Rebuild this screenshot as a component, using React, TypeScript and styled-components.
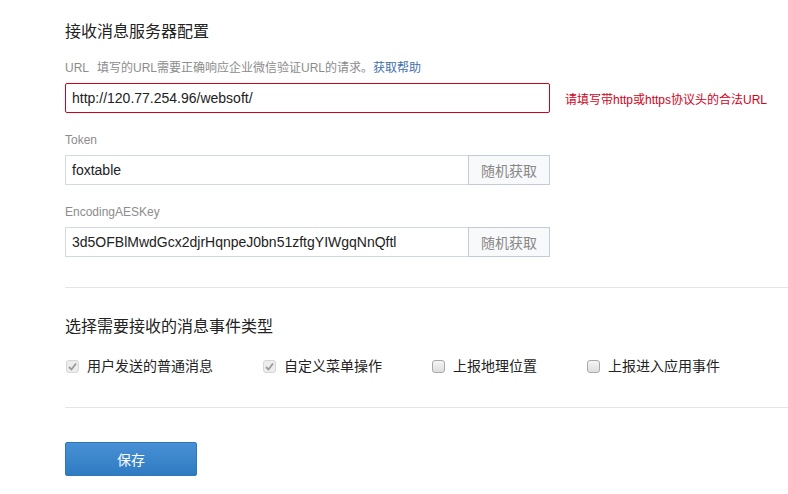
import * as React from 'react'
import styled, { createGlobalStyle } from 'styled-components'

const GlobalStyle = createGlobalStyle`
    body {
        margin: 0;
        background: #fff;
        font-family: 'Liberation Sans', 'Noto Sans CJK SC', sans-serif;
    }
`

const Page = styled.div`
    padding: 21px 0 0 65px;
    width: 723px;
`

const SectionTitle = styled.h3`
    margin: 0;
    font-size: 16px;
    line-height: 22px;
    font-weight: normal;
    color: #222;
`

const Fields = styled.div`
    display: flex;
    flex-direction: column;
    gap: 20px;
    margin-top: 18px;
`

const Field = styled.div`
    display: flex;
    flex-direction: column;
    gap: 8px;
`

const Label = styled.div`
    font-size: 12px;
    line-height: 14px;
    color: #8c8c8c;
`

const Tip = styled.span`
    margin-left: 8px;
`

const HelpLink = styled.a`
    color: #3f6fae;
    text-decoration: none;
`

const Row = styled.div`
    display: flex;
    align-items: center;
`

const InputBox = styled.div<{ $error?: boolean }>`
    display: flex;
    width: 485px;
    height: 30px;
    box-sizing: border-box;
    border: 1px solid ${(p) => (p.$error ? '#d0021b' : '#d3d9e0')};
    border-radius: ${(p) => (p.$error ? '2px' : '0')};
    background: #fff;
`

const Value = styled.div`
    flex: 1;
    padding: 0 6px;
    font-size: 14px;
    line-height: 28px;
    color: #222;
    white-space: nowrap;
    overflow: hidden;
`

const RandomButton = styled.button`
    width: 82px;
    margin: -1px -1px -1px 0;
    border: 1px solid #c3cbd5;
    background: #f8f9fa;
    color: #888;
    font-family: inherit;
    font-size: 14px;
    padding: 0;
    cursor: pointer;
`

const ErrorText = styled.span`
    margin-left: 15px;
    font-size: 12px;
    color: #d0021b;
`

const Divider = styled.hr`
    margin: 0;
    border: none;
    border-top: 1px solid #e5e5e5;
    width: 723px;
`

const Section = styled.div<{ $top: number; $bottom: number }>`
    padding: ${(p) => p.$top}px 0 ${(p) => p.$bottom}px;
`

const CheckList = styled.div`
    display: flex;
    margin-top: 18px;
`

const CheckItem = styled.label`
    display: flex;
    align-items: center;
    margin-right: 49px;
    font-size: 14px;
    line-height: 20px;
    color: #222;
`

const Box = styled.span<{ $checked?: boolean }>`
    display: inline-flex;
    align-items: center;
    justify-content: center;
    width: 13px;
    height: 13px;
    box-sizing: border-box;
    margin: 0 8px 0 1px;
    border: 1px solid ${(p) => (p.$checked ? '#d6d6d6' : '#a9a9a9')};
    border-radius: 3px;
    background: ${(p) =>
        p.$checked ? '#ededed' : 'linear-gradient(#f4f4f4, #dedede)'};
`

const SaveButton = styled.button`
    width: 132px;
    height: 34px;
    border: 1px solid #2f77bd;
    border-radius: 2px;
    background: linear-gradient(#4890d6, #2f7bc1);
    color: #fff;
    font-family: inherit;
    font-size: 14px;
    cursor: pointer;
`

type TCheckProps = {
    label: string
    checked?: boolean
}

const Check = ({ label, checked }: TCheckProps): JSX.Element => (
    <CheckItem>
        <Box $checked={checked}>
            {checked && (
                <svg width="9" height="9" viewBox="0 0 9 9">
                    <path d="M1 5 L3.5 7.5 L8 1.5" fill="none" stroke="#9a9a9a" strokeWidth="1.8" />
                </svg>
            )}
        </Box>
        {label}
    </CheckItem>
)

const App = (): JSX.Element => {
    return (
        <Page>
            <GlobalStyle />
            <Section $top={0} $bottom={30}>
                <SectionTitle>接收消息服务器配置</SectionTitle>
                <Fields>
                    <Field>
                        <Label>
                            URL
                            <Tip>填写的URL需要正确响应企业微信验证URL的请求。</Tip>
                            <HelpLink href="#">获取帮助</HelpLink>
                        </Label>
                        <Row>
                            <InputBox $error>
                                <Value>http://120.77.254.96/websoft/</Value>
                            </InputBox>
                            <ErrorText>请填写带http或https协议头的合法URL</ErrorText>
                        </Row>
                    </Field>
                    <Field>
                        <Label>Token</Label>
                        <InputBox>
                            <Value>foxtable</Value>
                            <RandomButton>随机获取</RandomButton>
                        </InputBox>
                    </Field>
                    <Field>
                        <Label>EncodingAESKey</Label>
                        <InputBox>
                            <Value>3d5OFBlMwdGcx2djrHqnpeJ0bn51zftgYIWgqNnQftl</Value>
                            <RandomButton>随机获取</RandomButton>
                        </InputBox>
                    </Field>
                </Fields>
            </Section>
            <Divider />
            <Section $top={28} $bottom={31}>
                <SectionTitle>选择需要接收的消息事件类型</SectionTitle>
                <CheckList>
                    <Check label="用户发送的普通消息" checked />
                    <Check label="自定义菜单操作" checked />
                    <Check label="上报地理位置" />
                    <Check label="上报进入应用事件" />
                </CheckList>
            </Section>
            <Divider />
            <Section $top={34} $bottom={0}>
                <SaveButton>保存</SaveButton>
            </Section>
        </Page>
    )
}

export default App
